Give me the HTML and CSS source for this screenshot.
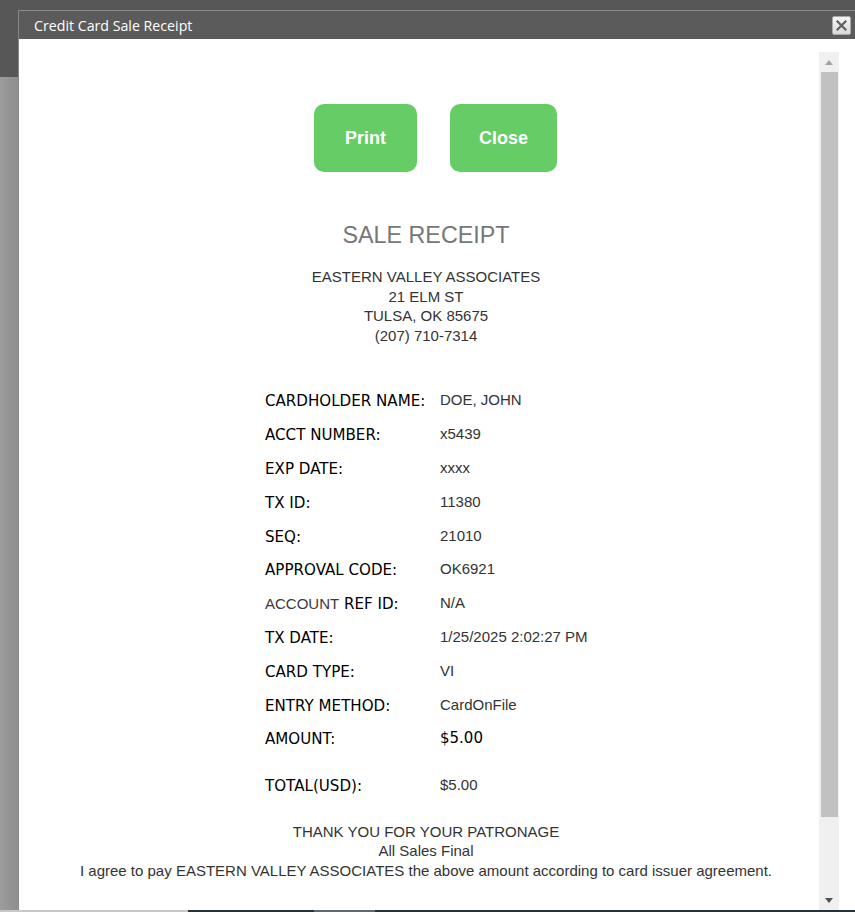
FILE: index.html
```html
<!DOCTYPE html>
<html>
<head>
<meta charset="utf-8">
<title>Credit Card Sale Receipt</title>
<link rel="stylesheet" href="styles.css">
</head>
<body>
<div class="backdrop">
  <div class="backdrop-top"></div>
  <div class="backdrop-rest"></div>
  <div class="taskbar"><span class="tb-a"></span><span class="tb-b"></span><span class="tb-c"></span><span class="tb-d"></span></div>
</div>

<div class="dialog">
  <div class="titlebar">
    <span class="title">Credit Card Sale Receipt</span>
    <button class="close-x" aria-label="Close">
      <svg width="11" height="11" viewBox="0 0 11 11"><path d="M1.5 1.5 L9.5 9.5 M9.5 1.5 L1.5 9.5" stroke="#5f5f5f" stroke-width="2.2" stroke-linecap="square"/></svg>
    </button>
  </div>
  <div class="dialog-body">
    <main class="receipt">
      <div class="actions">
        <button class="btn btn-print">Print</button>
        <button class="btn btn-close">Close</button>
      </div>
      <h1 class="heading">SALE RECEIPT</h1>
      <div class="merchant">
        <div>EASTERN VALLEY ASSOCIATES</div>
        <div>21 ELM ST</div>
        <div>TULSA, OK 85675</div>
        <div>(207) 710-7314</div>
      </div>
      <div class="details">
        <div class="lbl">CARDHOLDER NAME:</div><div class="val">DOE, JOHN</div>
        <div class="lbl">ACCT NUMBER:</div><div class="val">x5439</div>
        <div class="lbl">EXP DATE:</div><div class="val">xxxx</div>
        <div class="lbl">TX ID:</div><div class="val">11380</div>
        <div class="lbl">SEQ:</div><div class="val">21010</div>
        <div class="lbl">APPROVAL CODE:</div><div class="val">OK6921</div>
        <div class="lbl"><span class="lbl-alt">ACCOUNT</span> REF ID:</div><div class="val">N/A</div>
        <div class="lbl">TX DATE:</div><div class="val">1/25/2025 2:02:27 PM</div>
        <div class="lbl">CARD TYPE:</div><div class="val">VI</div>
        <div class="lbl">ENTRY METHOD:</div><div class="val">CardOnFile</div>
        <div class="lbl">AMOUNT:</div><div class="val val-amount">$5.00</div>
      </div>
      <div class="details details-total">
        <div class="lbl">TOTAL(USD):</div><div class="val">$5.00</div>
      </div>
      <div class="footer-note">
        <div>THANK YOU FOR YOUR PATRONAGE</div>
        <div>All Sales Final</div>
        <div>I agree to pay EASTERN VALLEY ASSOCIATES the above amount according to card issuer agreement.</div>
      </div>
    </main>
    <div class="scrollbar">
      <div class="sb-btn"><span class="arrow-up"></span></div>
      <div class="sb-thumb"></div>
      <div class="sb-track"></div>
      <div class="sb-btn"><span class="arrow-down"></span></div>
    </div>
  </div>
</div>
</body>
</html>
```

FILE: styles.css
```css
html, body {
  margin: 0;
  padding: 0;
}
body {
  width: 855px;
  height: 912px;
  overflow: hidden;
  position: relative;
  font-family: "Liberation Sans", Arial, sans-serif;
}

/* backdrop behind the modal */
.backdrop {
  display: flex;
  flex-direction: column;
  height: 912px;
}
.backdrop-top {
  height: 77px;
  background: #575757;
}
.backdrop-rest {
  flex: 1;
  background: linear-gradient(to right, #9c9c9c 0, #8e8e8e 17px, #9a9a9a 18px);
}
.taskbar {
  height: 2px;
  display: flex;
}
.tb-a { width: 188px; background: #c8c8c8; }
.tb-b { width: 126px; background: #24343a; }
.tb-c { width: 61px; background: #5c6a70; }
.tb-d { flex: 1; background: #24343a; }

/* modal */
.dialog {
  position: absolute;
  left: 18px;
  top: 10px;
  width: 836px;
  height: 899px;
  border-top: 1px solid #8c8c8c;
  border-left: 1px solid #858585;
  background: #fff;
  display: flex;
  flex-direction: column;
}
.titlebar {
  height: 28px;
  background: #5b5b5b;
  display: flex;
  align-items: center;
  justify-content: space-between;
  padding: 0 4px 0 15px;
}
.title {
  font-family: "Open Sans", "Noto Sans", sans-serif;
  font-size: 14.2px;
  color: #ffffff;
  line-height: 28px;
  padding-top: 1px;
}
.close-x {
  width: 19px;
  height: 19px;
  padding: 0;
  border: 1px solid #a8a8a8;
  border-radius: 2px;
  background: linear-gradient(#f6f6f6, #d9d9d9);
  display: flex;
  align-items: center;
  justify-content: center;
}

.dialog-body {
  flex: 1;
  display: flex;
  align-items: flex-start;
}

.receipt {
  width: 786px;
  padding-left: 14px;
  display: flex;
  flex-direction: column;
  align-items: center;
  color: #333;
  font-size: 15px;
}

.actions {
  display: flex;
  gap: 33px;
  margin-top: 65px;
  margin-left: 19px;
}
.btn {
  height: 68px;
  border: none;
  border-radius: 10px;
  background: #66cc66;
  color: #fff;
  font-family: "Liberation Sans", Arial, sans-serif;
  font-weight: bold;
  font-size: 18px;
  padding: 0;
}
.btn-print { width: 103px; }
.btn-close { width: 107px; }

.heading {
  margin: 48px 0 0;
  font-weight: normal;
  font-size: 23.3px;
  line-height: 30px;
  color: #777;
}

.merchant {
  margin-top: 17px;
  text-align: center;
  line-height: 19.5px;
}

.details {
  margin-top: 38px;
  margin-left: 3px;
  display: grid;
  grid-template-columns: 175px 150px;
  grid-auto-rows: 33.8px;
  align-items: center;
}
.details-total {
  margin-top: 13px;
}
.lbl {
  font-family: "DejaVu Sans", Verdana, sans-serif;
  font-size: 15.1px;
  color: #000;
  padding-top: 3px;
}
.lbl-alt {
  font-family: "Liberation Sans", Arial, sans-serif;
  font-size: 15px;
  color: #3a3a3a;
}
.val {
  color: #333;
  white-space: nowrap;
}
.val-amount {
  font-family: "DejaVu Sans", Verdana, sans-serif;
  font-size: 15px;
  color: #000;
}

.footer-note {
  margin-top: 20px;
  text-align: center;
  line-height: 19.5px;
  white-space: nowrap;
}

/* fake scrollbar */
.scrollbar {
  width: 20px;
  height: 858px;
  margin-top: 13px;
  background: #f0f0f0;
  display: flex;
  flex-direction: column;
}
.sb-btn {
  height: 20px;
  display: flex;
  align-items: center;
  justify-content: center;
}
.sb-thumb {
  height: 745px;
  width: 17px;
  margin-left: 2px;
  background: #c1c1c1;
}
.sb-track { flex: 1; }
.arrow-up {
  width: 0;
  height: 0;
  border-left: 4.5px solid transparent;
  border-right: 4.5px solid transparent;
  border-bottom: 5px solid #a3a3a3;
}
.arrow-down {
  width: 0;
  height: 0;
  border-left: 4.5px solid transparent;
  border-right: 4.5px solid transparent;
  border-top: 5px solid #505050;
}
```
